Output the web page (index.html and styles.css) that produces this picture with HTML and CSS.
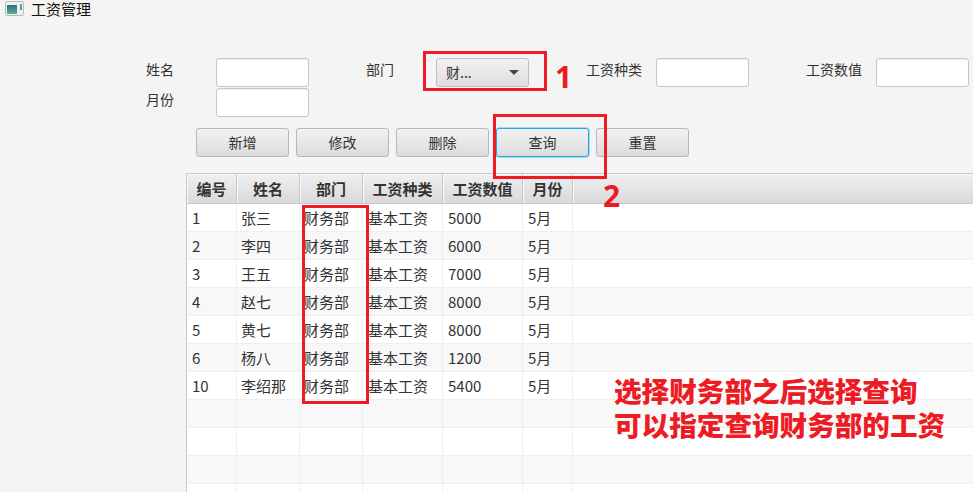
FILE: index.html
```html
<!DOCTYPE html>
<html lang="zh">
<head>
<meta charset="utf-8">
<title>工资管理</title>
<link rel="stylesheet" href="styles.css">
</head>
<body>
<div class="app">
  <header class="titlebar">
    <svg class="appicon" width="19" height="15" viewBox="0 0 19 15">
      <defs><linearGradient id="g" x1="0" y1="0" x2="0" y2="1"><stop offset="0" stop-color="#2c6a8e"/><stop offset="1" stop-color="#62b088"/></linearGradient></defs>
      <rect x="0.5" y="0.5" width="18" height="14" rx="1" fill="#eef1f2" stroke="#b4bcc0"/>
      <rect x="2" y="4" width="10" height="9" fill="url(#g)"/>
      <rect x="15" y="3" width="2" height="6" fill="#5f9aa5"/>
    </svg>
    <span class="apptitle">工资管理</span>
  </header>
  <main class="content">
    <form class="form">
      <div class="group"><label class="lbl">姓名</label><input class="field"></div>
      <div class="group"><label class="lbl">部门</label><div class="combo"><span>财...</span><i class="arrow"></i></div></div>
      <div class="group"><label class="lbl">工资种类</label><input class="field"></div>
      <div class="group"><label class="lbl">工资数值</label><input class="field"></div>
      <div class="group"><label class="lbl">月份</label><input class="field"></div>
    </form>
    <div class="actions">
      <button type="button" class="btn">新增</button>
      <button type="button" class="btn">修改</button>
      <button type="button" class="btn">删除</button>
      <button type="button" class="btn focused">查询</button>
      <button type="button" class="btn">重置</button>
    </div>
    <div class="table">
      <div class="row head"><div>编号</div><div>姓名</div><div>部门</div><div>工资种类</div><div>工资数值</div><div>月份</div><div></div></div>
      <div class="row"><div>1</div><div>张三</div><div>财务部</div><div>基本工资</div><div>5000</div><div>5月</div><div></div></div>
      <div class="row"><div>2</div><div>李四</div><div>财务部</div><div>基本工资</div><div>6000</div><div>5月</div><div></div></div>
      <div class="row"><div>3</div><div>王五</div><div>财务部</div><div>基本工资</div><div>7000</div><div>5月</div><div></div></div>
      <div class="row"><div>4</div><div>赵七</div><div>财务部</div><div>基本工资</div><div>8000</div><div>5月</div><div></div></div>
      <div class="row"><div>5</div><div>黄七</div><div>财务部</div><div>基本工资</div><div>8000</div><div>5月</div><div></div></div>
      <div class="row"><div>6</div><div>杨八</div><div>财务部</div><div>基本工资</div><div>1200</div><div>5月</div><div></div></div>
      <div class="row"><div>10</div><div>李绍那</div><div>财务部</div><div>基本工资</div><div>5400</div><div>5月</div><div></div></div>
      <div class="row"><div></div><div></div><div></div><div></div><div></div><div></div><div></div></div>
      <div class="row"><div></div><div></div><div></div><div></div><div></div><div></div><div></div></div>
      <div class="row"><div></div><div></div><div></div><div></div><div></div><div></div><div></div></div>
      <div class="row"><div></div><div></div><div></div><div></div><div></div><div></div><div></div></div>
    </div>
  </main>
  <div class="mark mark-combo"></div>
  <div class="mark mark-query"></div>
  <div class="mark mark-col"></div>
  <div class="num num-1">1</div>
  <div class="num num-2">2</div>
  <div class="note">选择财务部之后选择查询<br>可以指定查询财务部的工资</div>
</div>
</body>
</html>
```

FILE: styles.css
```css
* { box-sizing: border-box; }
html, body { margin: 0; padding: 0; height: 100%; overflow: hidden; }
body { background: #f4f4f4; font-family: "Noto Sans CJK SC", "Liberation Sans", sans-serif; font-size: 14px; color: #333; }
.app { position: relative; width: 973px; height: 492px; overflow: hidden; }
.titlebar { height: 28px; background: #f6f4f2; display: flex; align-items: flex-start; padding: 0 0 0 5px; gap: 7px; }
.apptitle { color: #111; font-size: 15px; line-height: 17px; }
.appicon { flex: none; margin-top: 1px; }
.content { padding: 30px 0 0 146px; }
.form { display: grid; grid-template-columns: repeat(4, 163px); column-gap: 57px; row-gap: 1px; grid-auto-rows: 29px; }
.group { display: grid; grid-template-columns: 70px 93px; }
.lbl { font-size: 14px; line-height: 22px; color: #333; }
.field { height: 29px; width: 93px; border: 1px solid #c6c6c6; border-radius: 3px; background: #fff; box-shadow: inset 0 1px 1px #eee; padding: 0; }
.combo { height: 29px; width: 93px; border: 1px solid #bdbdbd; border-radius: 3px; background: linear-gradient(#f1f1f1, #dedede); display: flex; align-items: center; justify-content: space-between; padding: 0 9px 1px 9px; color: #333; }
.arrow { width: 0; height: 0; border-left: 5px solid transparent; border-right: 5px solid transparent; border-top: 5px solid #444; }
.actions { display: flex; gap: 7px; margin: 11px 0 0 50px; }
.btn { width: 93px; height: 29px; padding: 0 0 2px; border: 1px solid #b8b8b8; border-radius: 3px; background: linear-gradient(#f2f2f2, #dcdcdc); font: inherit; color: #333; }
.focused { border-color: #1ea7e0; box-shadow: 0 0 0 0.5px #5cc2ec; }
.table { margin: 16px 0 0 40px; width: 787px; background: #fff; border-left: 1px solid #c8c8c8; border-top: 1px solid #c8c8c8; font-size: 15px; }
.row { display: grid; grid-template-columns: 50px 63px 63px 80px 80px 50px 1fr; height: 28px; border-bottom: 1px solid #efefef; background: #fff; line-height: 28px; }
.row:nth-child(odd) { background: #f8f8f8; }
.row > div { padding-left: 5px; border-right: 1px solid #efefef; white-space: nowrap; overflow: hidden; }
.row > div:nth-child(2) { padding-left: 4px; }
.row > div:nth-child(3) { padding-left: 4px; }
.row > div:nth-child(4) { padding-left: 5px; }
.row > div:last-child { border-right: 0; }
.row.head { height: 30px; background: linear-gradient(#f0f0f0, #d9d9d9); border-bottom: 1px solid #c8c8c8; font-weight: 700; line-height: 29px; }
.row.head > div { padding: 0; text-align: center; border-right: 1px solid #c8c8c8; box-shadow: inset 1px 1px 0 #f8f8f8; }
.row.head > div:last-child { border-right: 0; }
.mark { position: absolute; border: 3px solid #ed1c24; }
.mark-combo { left: 423px; top: 51px; width: 124px; height: 40px; }
.mark-query { left: 493px; top: 114px; width: 114px; height: 65px; }
.mark-col { left: 302px; top: 205px; width: 67px; height: 199px; }
.num { position: absolute; color: #ed1c24; font-weight: 700; font-size: 30px; line-height: 30px; font-family: "Open Sans", "Liberation Sans", sans-serif; }
.num-1 { left: 555px; top: 62px; }
.num-2 { left: 603px; top: 181px; }
.note { position: absolute; left: 614px; top: 373px; color: #ed1c24; font-weight: 900; font-size: 27.6px; line-height: 34px; white-space: nowrap; }
```
